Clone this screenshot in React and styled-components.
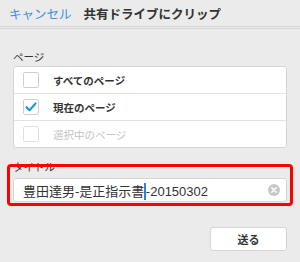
import React from "react";
import styled, { createGlobalStyle } from "styled-components";

const Global = createGlobalStyle`
  html, body { margin: 0; padding: 0; background: #ebebeb; }
  body { font-family: "Liberation Sans", "Noto Sans CJK JP", sans-serif; width: 300px; height: 262px; overflow: hidden; }
`;

const Page = styled.div`
  width: 300px;
  height: 262px;
  background: #ebebeb;
  display: flex;
  flex-direction: column;
`;

const Header = styled.div`
  height: 26px;
  display: flex;
  align-items: center;
  gap: 12px;
  padding-left: 9px;
  border-bottom: 3px double #d6d6d6;
  font-family: "Noto Sans CJK JP", sans-serif;
  font-size: 12.5px;
`;

const Cancel = styled.span`
  color: #3d8fe3;
`;

const Title = styled.span`
  color: #333;
  font-weight: bold;
`;

const Body = styled.div`
  padding: 21px 13px 0 13px;
  display: flex;
  flex-direction: column;
`;

const Label = styled.div`
  font-family: "Noto Sans CJK JP", sans-serif;
  font-size: 10.5px;
  line-height: 14px;
  color: #333;
  margin-bottom: 2px;
`;

const List = styled.div`
  background: #fff;
  border: 1px solid #d6d6d6;
  border-radius: 3px;
  display: flex;
  flex-direction: column;
`;

const Row = styled.div`
  height: 26px;
  display: flex;
  align-items: center;
  padding-left: 9px;
  gap: 14px;
  & + & { border-top: 1px solid #e2e2e2; }
  font-family: "Noto Sans CJK JP", sans-serif;
  font-size: 10.5px;
  font-weight: bold;
  color: ${(p) => (p.$disabled ? "#c4c4c4" : "#333")};
  ${(p) => p.$disabled && "font-weight: normal;"}
`;

const Box = styled.span`
  width: 14px;
  height: 14px;
  border: 1px solid ${(p) => (p.$disabled ? "#e0e0e0" : "#cfcfcf")};
  border-radius: 2px;
  display: flex;
  align-items: center;
  justify-content: center;
  background: #fff;
`;

const TitleSection = styled.div`
  position: relative;
  margin-top: 12px;
  display: flex;
  flex-direction: column;
`;

const Highlight = styled.div`
  position: absolute;
  left: -6px;
  right: -6px;
  top: 4px;
  height: 42px;
  border: 3px solid #f00;
  border-radius: 4px;
  box-sizing: border-box;
  pointer-events: none;
`;

const Input = styled.div`
  height: 24px;
  background: #fff;
  border: 1px solid #d6d6d6;
  border-radius: 3px;
  display: flex;
  align-items: center;
  padding: 0 6px 0 9px;
  font-family: "Liberation Sans", "Noto Sans CJK JP", sans-serif;
  font-size: 13px;
  color: #333;
  box-sizing: border-box;
  margin-top: 2px;
`;

const Text = styled.span`
  flex: 1;
  white-space: nowrap;
`;

const Caret = styled.span`
  display: inline-block;
  width: 1.5px;
  height: 17px;
  background: #2f7fe6;
  vertical-align: -4px;
`;

const Footer = styled.div`
  display: flex;
  justify-content: flex-end;
  margin-top: 25px;
`;

const Button = styled.button`
  width: 77px;
  height: 24px;
  background: #fff;
  border: 1px solid #d6d6d6;
  border-radius: 3px;
  font-family: "Noto Sans CJK JP", sans-serif;
  font-size: 11px;
  font-weight: bold;
  color: #333;
  padding: 0;
`;

const Check = () => (
  <svg width="12" height="10" viewBox="0 0 12 10">
    <path d="M1.5 5.2 L4.5 8.2 L10.5 1.5" fill="none" stroke="#1e9ad6" strokeWidth="2.2" strokeLinecap="round" strokeLinejoin="round" />
  </svg>
);

const Clear = () => (
  <svg width="12" height="12" viewBox="0 0 12 12">
    <circle cx="6" cy="6" r="6" fill="#c8c8c8" />
    <path d="M3.8 3.8 L8.2 8.2 M8.2 3.8 L3.8 8.2" stroke="#fff" strokeWidth="1.5" strokeLinecap="round" />
  </svg>
);

export default function App() {
  return (
    <Page>
      <Global />
      <Header>
        <Cancel>キャンセル</Cancel>
        <Title>共有ドライブにクリップ</Title>
      </Header>
      <Body>
        <Label>ページ</Label>
        <List>
          <Row>
            <Box />
            すべてのページ
          </Row>
          <Row>
            <Box>
              <Check />
            </Box>
            現在のページ
          </Row>
          <Row $disabled>
            <Box $disabled />
            選択中のページ
          </Row>
        </List>
        <TitleSection>
          <Label>タイトル</Label>
          <Input>
            <Text>
              豊田達男-是正指示書<Caret />-20150302
            </Text>
            <Clear />
          </Input>
          <Highlight />
        </TitleSection>
        <Footer>
          <Button>送る</Button>
        </Footer>
      </Body>
    </Page>
  );
}
